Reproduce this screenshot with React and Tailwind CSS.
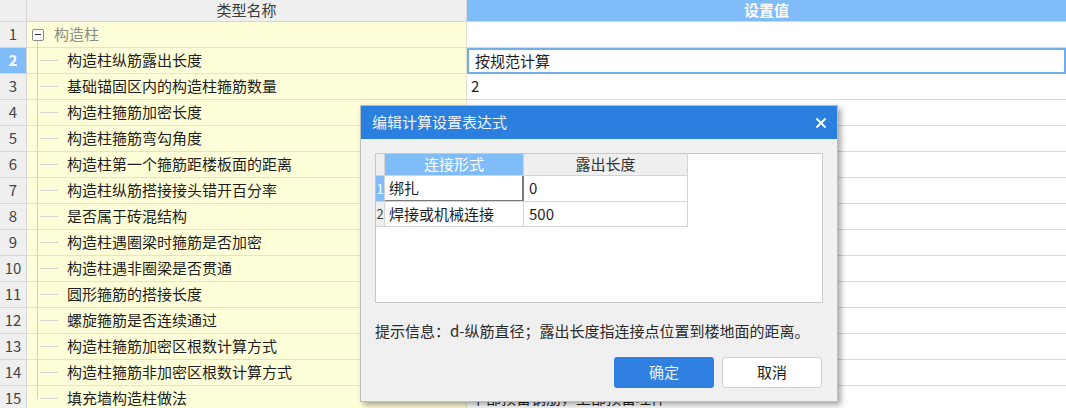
import React from "react";

const rows = [
  { no: 1, name: "构造柱", value: "", group: true },
  { no: 2, name: "构造柱纵筋露出长度", value: "按规范计算", selected: true },
  { no: 3, name: "基础锚固区内的构造柱箍筋数量", value: "2" },
  { no: 4, name: "构造柱箍筋加密长度", value: "" },
  { no: 5, name: "构造柱箍筋弯勾角度", value: "" },
  { no: 6, name: "构造柱第一个箍筋距楼板面的距离", value: "" },
  { no: 7, name: "构造柱纵筋搭接接头错开百分率", value: "" },
  { no: 8, name: "是否属于砖混结构", value: "" },
  { no: 9, name: "构造柱遇圈梁时箍筋是否加密", value: "" },
  { no: 10, name: "构造柱遇非圈梁是否贯通", value: "" },
  { no: 11, name: "圆形箍筋的搭接长度", value: "" },
  { no: 12, name: "螺旋箍筋是否连续通过", value: "" },
  { no: 13, name: "构造柱箍筋加密区根数计算方式", value: "" },
  { no: 14, name: "构造柱箍筋非加密区根数计算方式", value: "" },
  { no: 15, name: "填充墙构造柱做法", value: "下部预留钢筋，上部预留埋件" },
];

const font = { fontFamily: '"Noto Sans CJK SC", "Noto Sans", sans-serif' };

function TreeCell({ row, last }) {
  if (row.group) {
    return (
      <div className="relative flex h-full items-center">
        <div className="ml-[5px] flex h-[12px] w-[12px] items-center justify-center rounded-[2px] border border-[#8a8a8a] bg-white">
          <div className="h-[1px] w-[6px] bg-[#333]" />
        </div>
        <span className="ml-[10px] text-[#8c8c8c]">{row.name}</span>
        <div className="absolute left-[10px] top-[19px] h-[8px] w-[1px] bg-[#cfcfcf]" />
      </div>
    );
  }
  return (
    <div className="relative flex h-full items-center">
      <div className={`absolute left-[10px] top-0 w-[1px] bg-[#cfcfcf] ${last ? "h-[13px]" : "h-full"}`} />
      <div className="ml-[13px] h-[1px] w-[18px] bg-[#d6d6d6]" />
      <span className="ml-[9px] text-[#1e1e1e]">{row.name}</span>
    </div>
  );
}

function Dialog() {
  return (
    <div className="absolute left-[360px] top-[105px] flex h-[297px] w-[478px] flex-col border border-[#bdbdbd] bg-[#f0f0f0] shadow-[3px_3px_6px_rgba(0,0,0,0.35)]">
      <div className="flex h-[33px] items-center justify-between bg-[#2b80df] pl-[11px] pr-[10px] text-[15px] text-[#eef4fc]">
        <span>编辑计算设置表达式</span>
        <svg width="12" height="12" viewBox="0 0 12 12">
          <path d="M1.5 1.5 L10.5 10.5 M10.5 1.5 L1.5 10.5" stroke="#ffffff" strokeWidth="1.8" />
        </svg>
      </div>
      <div className="flex flex-1 flex-col px-[14px] pt-[14px]">
        <div className="h-[150px] border border-[#c9c9c9] bg-white">
          <div className="w-fit">
            <div className="flex h-[22px] border-b border-[#d4d4d4]">
              <div className="w-[9px] border-r border-[#d4d4d4] bg-[#efefef]" />
              <div className="flex w-[139px] items-center justify-center border-r border-[#d4d4d4] bg-[#80bcf7] text-white">连接形式</div>
              <div className="flex w-[164px] items-center justify-center border-r border-[#d4d4d4] bg-[#efefef] text-[#333]">露出长度</div>
            </div>
            <div className="flex h-[26px] border-b border-[#d4d4d4]">
              <div className="flex w-[9px] items-center justify-center border-r border-[#d4d4d4] bg-[#80bcf7] text-[13px] text-white">1</div>
              <div className="flex w-[139px] items-center border-r-2 border-b border-[#7a7a7a] pl-[4px] text-[#1e1e1e]">绑扎</div>
              <div className="flex w-[164px] items-center border-r border-[#d4d4d4] pl-[5px] text-[#1e1e1e]">0</div>
            </div>
            <div className="flex h-[25px] border-b border-[#d4d4d4]">
              <div className="flex w-[9px] items-center justify-center border-r border-[#d4d4d4] bg-[#efefef] text-[13px] text-[#444]">2</div>
              <div className="flex w-[139px] items-center border-r border-[#d4d4d4] pl-[4px] text-[#1e1e1e]">焊接或机械连接</div>
              <div className="flex w-[164px] items-center border-r border-[#d4d4d4] pl-[5px] text-[#1e1e1e]">500</div>
            </div>
          </div>
        </div>
        <div className="mt-[17px] text-[#2a2a2a]">提示信息：d-纵筋直径；露出长度指连接点位置到楼地面的距离。</div>
        <div className="mt-[14px] flex justify-end gap-[8px] pr-[1px]">
          <button className="h-[31px] w-[100px] rounded-[3px] bg-[#2f80e0] text-[#eaf2fc]">确定</button>
          <button className="h-[31px] w-[100px] rounded-[3px] border border-[#d2d2d2] bg-white text-[#222]">取消</button>
        </div>
      </div>
    </div>
  );
}

export default function App() {
  return (
    <div className="relative h-[408px] w-[1066px] overflow-hidden bg-white text-[15px]" style={font}>
      <div className="flex h-[22px] border-b border-[#d6d6d6]">
        <div className="w-[27px] border-r border-[#d6d6d6] bg-[#efefef]" />
        <div className="flex w-[440px] items-center justify-center border-r border-[#d6d6d6] bg-[#efefef] text-[#3a3a3a]">类型名称</div>
        <div className="flex flex-1 items-center justify-center bg-[#80bcf7] font-bold text-white">设置值</div>
      </div>
      {rows.map((row, i) => (
        <div key={row.no} className="flex h-[26px]">
          <div
            className={`flex w-[27px] items-center justify-center border-r border-b border-[#d6d6d6] ${
              row.selected ? "bg-[#80bcf7] font-bold text-white" : "bg-[#efefef] text-[#444]"
            }`}
          >
            {row.no}
          </div>
          <div className="w-[440px] border-r border-b border-[#e2e2cf] bg-[#fefed8]">
            <TreeCell row={row} last={i === rows.length - 1} />
          </div>
          {row.selected ? (
            <div className="flex flex-1 items-center border-2 border-[#72aeea] pl-[6px] text-[#1e1e1e]">{row.value}</div>
          ) : (
            <div className="flex flex-1 items-center border-b border-[#d9d9d9] pl-[4px] text-[#1e1e1e]">{row.value}</div>
          )}
        </div>
      ))}
      <Dialog />
    </div>
  );
}
